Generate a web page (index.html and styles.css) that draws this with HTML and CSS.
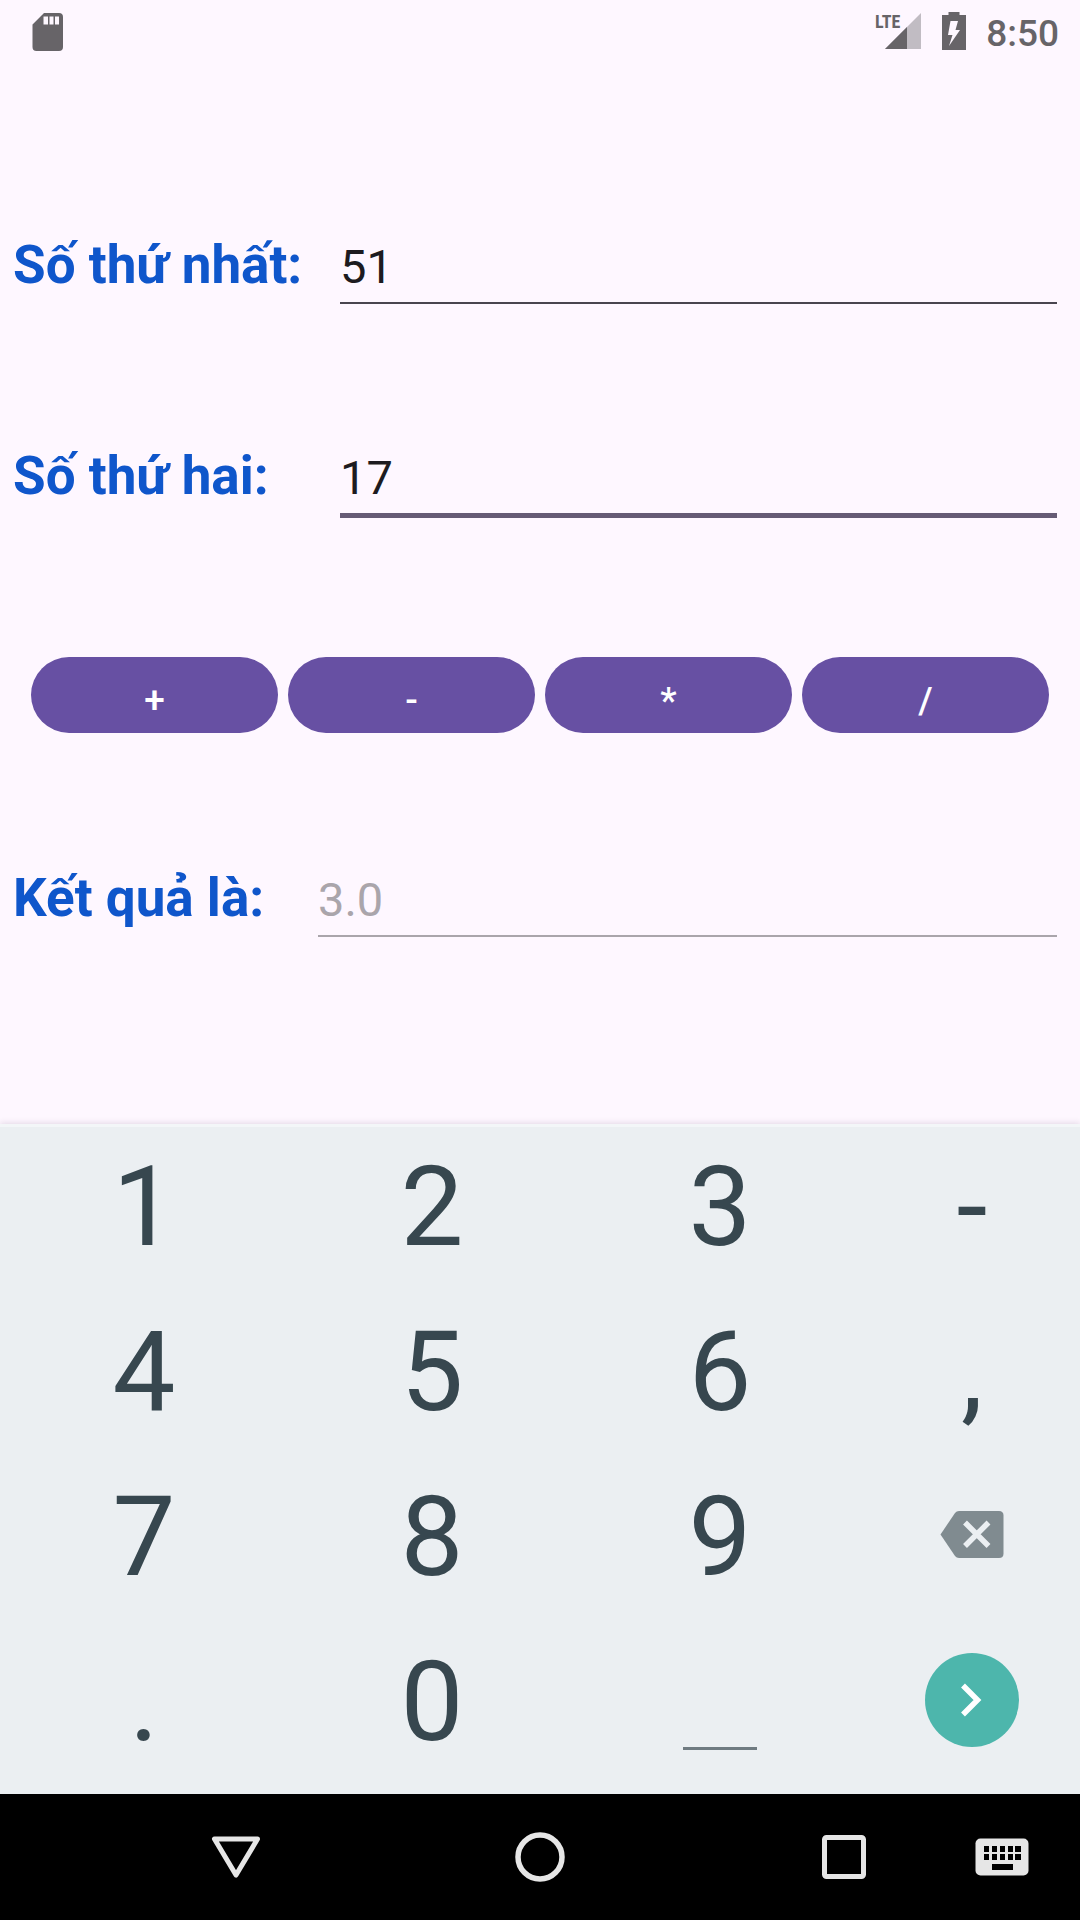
FILE: index.html
```html
<!DOCTYPE html>
<html lang="vi">
<head>
<meta charset="utf-8">
<meta name="viewport" content="width=device-width, initial-scale=1">
<title>Máy tính</title>
<link rel="stylesheet" href="styles.css">
</head>
<body>
<div class="screen">
  <header class="status">
    <svg class="sd" viewBox="0 0 32 40" width="32" height="40" aria-hidden="true">
      <path fill="currentColor" fill-rule="evenodd" d="M12 1H27Q31 1 31 5V35Q31 39 27 39H4.500Q.5 39 .5 35V12.500ZM11.500 4.500V12.500H16V4.500ZM17.500 4.500V12.500H21.500V4.500ZM23 4.500V12.500H27V4.500Z"/>
    </svg>
    <div class="status-right">
      <svg viewBox="0 0 48 40" width="48" height="40" role="img" aria-label="LTE">
        <path fill="#c1bcc3" d="M47 1V37H11Z"/>
        <path fill="currentColor" d="M33 15V37H11Z"/>
        <text class="lte" x="1" y="16">LTE</text>
      </svg>
      <svg viewBox="0 0 24 40" width="24" height="40" aria-hidden="true">
        <path fill="currentColor" fill-rule="evenodd" d="M6.500 0H17.500V3H24V38H0V3H6.500ZM8.500 9L6 23H10.500L7 34L18 18H13.500L16 9Z"/>
      </svg>
      <time class="clock">8:50</time>
    </div>
  </header>

  <main class="form">
    <div class="row">
      <label class="label" for="first">Số thứ nhất:</label>
      <input class="field" id="first" type="text" inputmode="decimal" value="51">
    </div>
    <div class="row">
      <label class="label" for="second">Số thứ hai:</label>
      <input class="field field-active" id="second" type="text" inputmode="decimal" value="17">
    </div>
    <div class="row row-buttons">
      <button class="op" type="button">+</button>
      <button class="op" type="button">-</button>
      <button class="op" type="button">*</button>
      <button class="op" type="button">/</button>
    </div>
    <div class="row">
      <label class="label label-result" for="result">Kết quả là:</label>
      <input class="field field-result" id="result" type="text" placeholder="3.0" readonly>
    </div>
  </main>

  <section class="keyboard" aria-label="Bàn phím">
    <button class="key" type="button">1</button>
    <button class="key" type="button">2</button>
    <button class="key" type="button">3</button>
    <button class="key" type="button">-</button>
    <button class="key" type="button">4</button>
    <button class="key" type="button">5</button>
    <button class="key" type="button">6</button>
    <button class="key" type="button">,</button>
    <button class="key" type="button">7</button>
    <button class="key" type="button">8</button>
    <button class="key" type="button">9</button>
    <button class="key" type="button" aria-label="Xóa">
      <svg viewBox="0 0 64 54" width="64" height="54">
        <path fill="#808b90" d="M.5 24.500L15 3Q16.500 1 19 1H59Q63.500 1 63.500 5.500V43.500Q63.500 48 59 48H19Q16.500 48 15 46Z"/>
        <path fill="none" stroke="#ebeff2" stroke-width="5.500" d="M25 12.500L48.500 36M48.500 12.500L25 36"/>
      </svg>
    </button>
    <button class="key" type="button">.</button>
    <button class="key" type="button">0</button>
    <button class="key" type="button" aria-label="Dấu cách">
      <svg viewBox="0 0 74 100" width="74" height="100">
        <path fill="#6f7b81" d="M0 95H74V98H0Z"/>
      </svg>
    </button>
    <button class="key" type="button" aria-label="Tiếp">
      <svg viewBox="0 0 96 98" width="96" height="98">
        <circle cx="48" cy="47" r="47" fill="#4db6ac"/>
        <path fill="none" stroke="#fff" stroke-width="5.500" d="M39 32.500L53.500 47L39 61.500"/>
      </svg>
    </button>
  </section>

  <nav class="nav" aria-label="Điều hướng">
    <button class="nav-btn nav-back" type="button" aria-label="Quay lại">
      <svg viewBox="0 0 52 52" width="52" height="52"><path fill="none" stroke="#e6e6e6" stroke-width="5" stroke-linejoin="round" d="M4.500 8H47.500L26 44Z"/></svg>
    </button>
    <button class="nav-btn" type="button" aria-label="Trang chủ">
      <svg viewBox="0 0 52 52" width="52" height="52"><circle cx="26" cy="26" r="22" fill="none" stroke="#e6e6e6" stroke-width="5.500"/></svg>
    </button>
    <button class="nav-btn" type="button" aria-label="Gần đây">
      <svg viewBox="0 0 52 52" width="52" height="52"><rect x="6.500" y="6.500" width="39" height="39" rx="2" fill="none" stroke="#e6e6e6" stroke-width="5"/></svg>
    </button>
    <button class="nav-btn" type="button" aria-label="Đổi bàn phím">
      <svg viewBox="0 0 54 38" width="54" height="38">
        <rect x=".5" y=".5" width="53" height="37" rx="5" fill="#e6e6e6"/>
        <path fill="#000" d="M9 8h5v6h-5zM17 8h5v6h-5zM25 8h5v6h-5zM33 8h5v6h-5zM40 8h6v6h-6zM9 16h5v6h-5zM17 16h5v6h-5zM25 16h5v6h-5zM33 16h5v6h-5zM40 16h6v6h-6zM17 26h21v6h-21z"/>
      </svg>
    </button>
  </nav>
</div>
</body>
</html>
```
FILE: styles.css
```css
* {
  box-sizing: border-box;
}

body {
  margin: 0;
  background: #fef7ff;
  font-family: Roboto, "Noto Sans", sans-serif;
}

button,
input {
  margin: 0;
  padding: 0;
  border: 0;
  border-radius: 0;
  background: none;
  font-family: inherit;
  outline: none;
}

svg {
  display: block;
  overflow: visible;
}

.screen {
  display: flex;
  flex-direction: column;
  min-height: 100vh;
}

/* Status bar */
.status {
  display: flex;
  justify-content: space-between;
  align-items: flex-start;
  padding: 12px 21px 0 32px;
  height: 63px;
  color: #676468;
}

.status-right {
  display: flex;
  gap: 20px;
}

.lte {
  fill: currentColor;
  font-family: "Roboto Condensed", "Open Sans Condensed", "Liberation Sans Narrow", Roboto, sans-serif;
  font-size: 18px;
  font-weight: 700;
}

.clock {
  font-size: 37px;
  font-weight: 500;
  line-height: 43px;
}

/* Calculator form */
.form {
  flex: 1;
  padding-top: 171px;
}

.row {
  display: flex;
  align-items: baseline;
  height: 211px;
  padding: 0 23px 0 13px;
}

.label {
  flex: none;
  width: 327px;
  color: #0f56cb;
  font-size: 53px;
  font-weight: 700;
  line-height: 62px;
}

.label-result {
  width: 305px;
}

.field {
  flex: 1;
  min-width: 0;
  padding-bottom: 8px;
  border-bottom: 2px solid #49454f;
  color: #1d1b20;
  font-size: 47px;
  line-height: 55px;
}

.field-active {
  border-bottom: 5px solid #665b75;
}

.field-result {
  border-bottom-color: #aaa5ab;
}

.field::placeholder {
  color: #aaa5ab;
  opacity: 1;
}

.row-buttons {
  align-items: flex-start;
  gap: 10px;
  padding: 1px 31px 0;
}

.op {
  flex: 1;
  height: 76px;
  padding-top: 10px;
  border-radius: 38px;
  background: #6750a3;
  color: #fff;
  font-size: 37px;
  font-weight: 500;
}

/* On-screen keyboard */
.keyboard {
  display: grid;
  grid-template-columns: 4fr 4fr 4fr 3fr;
  grid-auto-rows: 165px;
  padding-bottom: 10px;
  background: #ebeff2;
  box-shadow: inset 0 3px #f3f6f8, 0 -1px 6px rgba(60, 30, 70, 0.14);
}

.key {
  display: flex;
  align-items: center;
  justify-content: center;
  color: #37474f;
  font-size: 112px;
  line-height: 132px;
}

/* Navigation bar */
.nav {
  display: grid;
  grid-template-columns: 120fr 232fr 376fr 232fr 83fr 37fr;
  height: 126px;
  background: #000;
}

.nav-btn {
  display: flex;
  align-items: center;
  justify-content: center;
}

.nav-back {
  grid-column: 2;
}
```
